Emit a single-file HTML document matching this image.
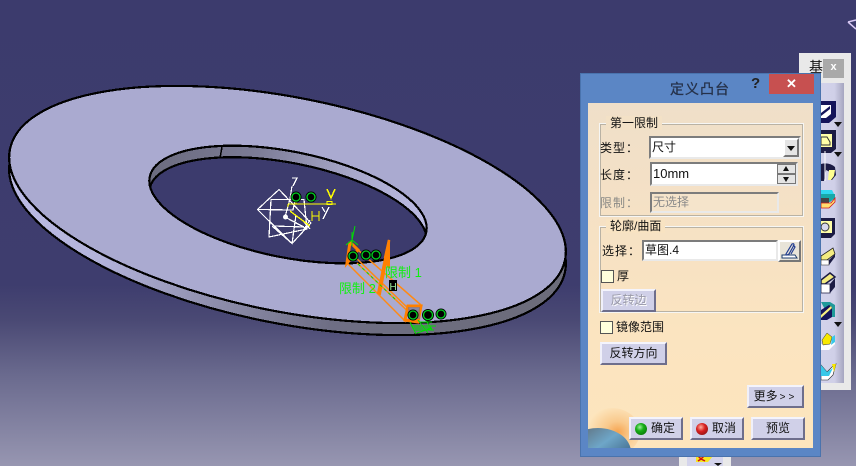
<!DOCTYPE html>
<html><head><meta charset="utf-8"><style>
html,body{margin:0;padding:0}
body{width:856px;height:466px;overflow:hidden;position:relative;background:#3c3b6d;font-family:"Liberation Sans","Noto Sans CJK SC",sans-serif;font-size:12px;color:#111}
.a{position:absolute;box-sizing:border-box}
.t{position:absolute;white-space:nowrap;line-height:14px}
.in{position:absolute;box-sizing:border-box;background:#fff;border-style:solid;border-width:2px;border-color:#7c7c7c #e9e9e9 #e9e9e9 #7c7c7c;line-height:18px;padding-left:1px;white-space:nowrap}
.btn{position:absolute;box-sizing:border-box;background:#d0d0e8;border-style:solid;border-width:2px;border-color:#f4f4fc #6e6e8c #6e6e8c #f0f0fa;text-align:center;line-height:18px;white-space:nowrap}
.grp{position:absolute;box-sizing:border-box;border:1px solid #f6f6f4;box-shadow:inset 0 0 0 1px #b9b2a4}
.lb{position:absolute;top:-8px;left:6px;padding:0 4px;line-height:14px;background:#f3e1c6}
.cb{position:absolute;box-sizing:border-box;width:13px;height:13px;background:#ffffdc;border:1.5px solid #555}
</style></head><body>
<div class="a" style="left:0;top:0;width:856px;height:466px;background:linear-gradient(#3c3b6d 0,#3e3d6e 285px,#4a4974 320px,#6a6a8e 375px,#9796b1 466px)"></div>

<svg class="a" style="left:0;top:0" width="856" height="466" viewBox="0 0 856 466">
<defs>
<linearGradient id="side" gradientUnits="userSpaceOnUse" x1="0" y1="0" x2="566" y2="0">
<stop offset="0" stop-color="#bcbce6"/><stop offset=".2" stop-color="#b2b2da"/><stop offset=".4" stop-color="#9090ae"/><stop offset=".62" stop-color="#6e6e84"/><stop offset="1" stop-color="#6c6c7a"/></linearGradient>
<linearGradient id="wall" gradientUnits="userSpaceOnUse" x1="150" y1="0" x2="430" y2="0">
<stop offset="0" stop-color="#6c6c80"/><stop offset=".35" stop-color="#7c7c96"/><stop offset=".7" stop-color="#a8a8ca"/><stop offset="1" stop-color="#bcbce4"/></linearGradient>
<clipPath id="hc"><ellipse cx="288" cy="204.5" rx="141" ry="53" transform="rotate(11.25 288 204.5)"/></clipPath>
</defs>
<g shape-rendering="crispEdges">
<ellipse cx="287.5" cy="216.5" rx="283" ry="107" transform="rotate(11.25 287.5 216.5)" fill="url(#side)" stroke="#000" stroke-width="2.2"/>
<ellipse cx="287.5" cy="204.5" rx="283" ry="107" transform="rotate(11.25 287.5 204.5)" fill="#aaaad0" stroke="#000" stroke-width="2.2"/>
<ellipse cx="288" cy="204.5" rx="141" ry="53" transform="rotate(11.25 288 204.5)" fill="url(#wall)"/>
<g clip-path="url(#hc)"><ellipse cx="288" cy="216" rx="141" ry="53" transform="rotate(11.25 288 216)" fill="#3c3b6d" stroke="#000" stroke-width="2.2"/>
<path d="M222 147L220 158" stroke="#000" stroke-width="1.5"/></g>
<ellipse cx="288" cy="204.5" rx="141" ry="53" transform="rotate(11.25 288 204.5)" fill="none" stroke="#000" stroke-width="2.2"/>
</g>

<!-- axis -->
<g fill="none" stroke="#fff" stroke-width="1.2" shape-rendering="crispEdges">
<path d="M257.5 209.500L279 189.500L311 223L292 243.500Z"/>
<path d="M271 199.500H304L307 229L269 237Z"/>
<path d="M257.500 209.500L293 210L296 196"/>
<path d="M272 226L292 243.500L296 215"/>
<path d="M274 226L304 227L285 217"/>
<path d="M292 178H297L293 186M292 186L290 199L285 217L307 229"/>
<path d="M304 229L310 220M304 222L310 229"/>
<path d="M322 207L325 212M329 207L323 219"/>
</g>
<circle cx="285.500" cy="217" r="2.500" fill="#fff"/>
<g fill="none" stroke="#ffff00" stroke-width="1.300" shape-rendering="crispEdges">
<path d="M288 204H336M288 204V207M296 200V204M290 211L310 226M312 211V221M319 211V221M312 216H319"/>
<path d="M327 189L331 198L335 189" stroke-width="1.500"/>
<rect x="327" y="201.500" width="5" height="3"/>
</g>

<!-- orange sketch -->
<g fill="none" stroke="#ff8a14" stroke-width="1.500">
<path d="M347 263L406 322M358 250L421 305M353 255L414 314M357 263L417 320"/>
</g>
<g fill="none" stroke="#ff8000" stroke-width="3">
<path d="M350 242L347 263L358 250L350 242"/>
<path d="M408 306H421L418 322L405 320Z"/>
</g>
<rect x="408" y="307" width="12" height="12" fill="#707088" opacity=".6"/>
<path d="M378 293L385 258L389 240L389 268L386 262L380 294Z" fill="#ff8000" stroke="#ff8000" stroke-width="2"/>
<path d="M385 258L389 240L387 262" fill="none" stroke="#ff8000" stroke-width="2.500"/>
<path d="M358 264L396 300" stroke="#00e000" stroke-width="1" stroke-dasharray="3 3" fill="none"/>
<path d="M355 226L352 240M352 232V246M346 245L352 240L358 245" stroke="#00e000" fill="none"/>
<path d="M410 322L416 334M411 326H436M414 330H434M417 333L432 328M425 319L432 330M420 322H432M412 328H430M418 320L428 333" stroke="#00e000" fill="none"/>

<!-- constraint circles -->
<g fill="#000"><circle cx="353" cy="256" r="5.500"/><circle cx="366" cy="255" r="5.500"/><circle cx="376" cy="255" r="5.500"/><circle cx="413" cy="315" r="5.500"/><circle cx="428" cy="315" r="6"/><circle cx="441" cy="314" r="5.500"/><circle cx="296" cy="197" r="5.500"/><circle cx="311" cy="197" r="5.500"/></g>
<g fill="none" stroke="#00d020" stroke-width="1.300"><circle cx="353" cy="256" r="4"/><circle cx="366" cy="255" r="4"/><circle cx="376" cy="255" r="4"/><circle cx="413" cy="315" r="4"/><circle cx="428" cy="315" r="4.500"/><circle cx="441" cy="314" r="4"/><circle cx="296" cy="197" r="4"/><circle cx="311" cy="197" r="4"/></g>
<text x="385" y="277" font-size="13" fill="#10f010" font-family="'Liberation Sans','Noto Sans CJK SC',sans-serif">限制 1</text>
<text x="339" y="293" font-size="13" fill="#10f010" font-family="'Liberation Sans','Noto Sans CJK SC',sans-serif">限制 2</text>
<rect x="389" y="280" width="8" height="11" fill="#000"/>
<text x="389.500" y="290" font-size="10" fill="#9ff09f" font-family="'Liberation Sans',sans-serif">H</text>

<!-- top right fragment -->
<path d="M848 22L856 20M848 22L856 29" stroke="#d8c8f4" stroke-width="1.500" fill="none"/>
</svg>

<!-- toolbar -->
<div class="a" style="left:799px;top:53px;width:52px;height:337px;background:#e9e9e9"></div>
<div class="t" style="left:809px;top:60px;font-size:14px">基</div>
<div class="a" style="left:823px;top:59px;width:21px;height:19px;background:#a9a9a9;color:#fff;text-align:center;line-height:17px;font-size:11px;font-weight:bold">x</div>
<div class="a" style="left:812px;top:83px;width:32px;height:300px;background:linear-gradient(90deg,#d4d4ec 0,#d0d0e8 70%,#a6a6c0 100%)"></div>
<svg class="a" style="left:799px;top:83px" width="57" height="310" viewBox="799 83 57 310">
<path d="M821 101H836V117L829 123H821Z" fill="#14145a"/><path d="M821 105H831V114L826 118H821Z" fill="#fff"/><path d="M821 113L830 106V109L821 116Z" fill="#14145a"/>
<path d="M834 122H842L838 127Z" fill="#111"/>
<path d="M821 130H836V149L831 153H821Z" fill="#1c1c44"/><path d="M821 134H832V147H821Z" fill="#ffffa8"/><path d="M821 137H827L830 142V145H821Z" fill="none" stroke="#333"/>
<path d="M834 152H842L838 157Z" fill="#111"/>
<path d="M821 164Q829 162 835 167L836 175L832 180H829L830 172L826 170L824 181H821Z" fill="#1c1c44"/><path d="M829 170L835 170L834 176L831 180H828Z" fill="#ffff90"/><path d="M825 151V181" stroke="#fff"/>
<path d="M821 190H832L834 194H821Z" fill="#30d8f0"/><path d="M821 194H835V198L830 202H821Z" fill="#18a8a8"/><rect x="821" y="198" width="8" height="5" fill="#444"/><path d="M821 203H831L835 198V202L829 208H821Z" fill="#ffe070" stroke="#d01818" stroke-width=".8"/>
<path d="M821 218H835V234L831 238H821Z" fill="#1c1c44"/><path d="M821 221H832V233H821Z" fill="#ffffa8"/><circle cx="825" cy="227" r="4" fill="#d8d8ec" stroke="#333"/>
<path d="M821 256L833 248L835 254L827 260L821 260Z" fill="#f4ec80" stroke="#222" stroke-width=".8"/><path d="M821 260H829V265H821Z" fill="#fff" stroke="#222" stroke-width=".6"/><path d="M829 260L835 254V257L829 265Z" fill="#1c1c44"/>
<path d="M821 280L830 273L835 277L825 284H821Z" fill="#f4ec80" stroke="#1c1c44" stroke-width="1.500"/><path d="M821 284H830V293H821Z" fill="#fff" stroke="#1c1c44" stroke-width=".8"/><path d="M830 284L835 278V287L830 293Z" fill="#1c1c44"/>
<path d="M821 302H830L835 305V317H829L821 302Z" fill="#209a9a"/><path d="M821 310L829 305L832 307V317L827 320H821Z" fill="#14145a"/><path d="M821 315L831 306L832 308L821 318Z" fill="#f8f080"/>
<path d="M834 322H842L838 327Z" fill="#111"/>
<path d="M821 344V350H829L835 344V338L830 343Z" fill="#fff"/><path d="M822 340L827 333L832 337L830 344L823 345Z" fill="#f8e800" stroke="#333" stroke-width=".5"/><path d="M832 337L835 335V342L831 345Z" fill="#38c8e8"/>
<path d="M821 365L827 372L833 366L836 364L833 375L828 380H821Z" fill="#fff" stroke="#222" stroke-width=".6"/><path d="M821 365L827 372L833 368L829 376H821Z" fill="#38c8e8"/><path d="M832 364H836L834 372Z" fill="#f8e800"/>
</svg>

<!-- lower toolbar fragment -->
<div class="a" style="left:679px;top:456px;width:52px;height:10px;background:#e9e9e9"></div>
<div class="a" style="left:687px;top:456px;width:36px;height:10px;background:#d4d4ec"></div>
<svg class="a" style="left:690px;top:456px" width="34" height="10" viewBox="0 0 34 10"><path d="M6 0H23L18 6H6Z" fill="#f8e820"/><path d="M8 0L11 3L14 0M8 5L11 3L15 5" stroke="#d01010" stroke-width="1.500" fill="none"/><path d="M24 7H32L28 10Z" fill="#111"/></svg>

<!-- dialog -->
<div class="a" style="left:580px;top:73px;width:241px;height:384px;background:#5b86c5;border:1px solid #4a73ad"></div>
<div class="a" style="left:769px;top:74px;width:45px;height:20px;background:#c75050;color:#fff;text-align:center;line-height:19px;font-size:13px;font-weight:bold">✕</div>
<div class="t" style="left:670px;top:81px;font-size:14px;line-height:16px;letter-spacing:1px;color:#26324a;-webkit-text-stroke:.3px #26324a">定义凸台</div>
<div class="t" style="left:751px;top:77px;font-size:15px;font-weight:bold;color:#222">?</div>
<div class="a" style="left:588px;top:103px;width:225px;height:345px;background:linear-gradient(#efdfc9 0,#f5e1c5 110px,#fbe4c0 230px,#fde5bd 345px);overflow:hidden">
<svg class="a" style="left:0;top:300px" width="60" height="45" viewBox="0 0 60 45">
<defs><radialGradient id="gl" cx="0.6" cy="0.5" r="0.55"><stop offset="0" stop-color="#f6a450"/><stop offset=".4" stop-color="#f9c98c"/><stop offset="1" stop-color="#fde5bd"/></radialGradient>
<linearGradient id="pl" x1="0" y1="0" x2="1" y2="1"><stop offset="0" stop-color="#5a5f66"/><stop offset=".45" stop-color="#6ea6c8"/><stop offset="1" stop-color="#22405f"/></linearGradient></defs>
<ellipse cx="24" cy="29" rx="28" ry="24" fill="url(#gl)"/>
<ellipse cx="10" cy="49" rx="33" ry="24" fill="url(#pl)"/>
</svg>
</div>

<div class="grp" style="left:599px;top:123px;width:205px;height:94px"><div class="lb">第一限制</div></div>
<div class="t" style="left:600px;top:141px;letter-spacing:1px">类型：</div>
<div class="in" style="left:649px;top:136px;width:152px;height:23px;padding-left:1px">尺寸</div>
<div class="btn" style="left:783px;top:138px;width:16px;height:19px;background:#e4e4e4;border-color:#fff #777 #777 #fff"></div>
<div class="a" style="left:787px;top:146px;border:4px solid transparent;border-top:5px solid #111;border-bottom:0"></div>
<div class="t" style="left:600px;top:168px;letter-spacing:1px">长度：</div>
<div class="in" style="left:650px;top:162px;width:148px;height:24px;font-size:13px;line-height:19px">10mm</div>
<div class="a" style="left:777px;top:164px;width:19px;height:20px;background:#777"></div>
<div class="a" style="left:778px;top:165px;width:17px;height:8px;background:#e4e4e4"></div>
<div class="a" style="left:778px;top:175px;width:17px;height:8px;background:#e4e4e4"></div>
<div class="a" style="left:783px;top:166px;border:3.500px solid transparent;border-bottom:5px solid #111;border-top:0"></div>
<div class="a" style="left:783px;top:177px;border:3.500px solid transparent;border-top:5px solid #111;border-bottom:0"></div>
<div class="t" style="left:600px;top:196px;color:#8a8a86;letter-spacing:1px">限制：</div>
<div class="in" style="left:650px;top:192px;width:129px;height:21px;background:#f5e4cb;color:#8a8a8a;line-height:17px">无选择</div>

<div class="grp" style="left:599px;top:226px;width:205px;height:87px"><div class="lb" style="background:#f8e3c2">轮廓/曲面</div></div>
<div class="t" style="left:602px;top:244px;letter-spacing:1px">选择：</div>
<div class="in" style="left:642px;top:240px;width:136px;height:21px;line-height:17px">草图.4</div>
<div class="btn" style="left:778px;top:240px;width:23px;height:22px;background:#e8e4d8;border-color:#fff #777 #777 #fff"></div>
<svg class="a" style="left:780px;top:242px" width="19" height="18" viewBox="0 0 19 18"><path d="M2 13H15L17 16H2Z" fill="#fff" stroke="#1c3c6c"/><path d="M6 12L12 2Q14 1 14 3L9 12Q6 14 6 12ZM13 3L15 5L11 12" fill="none" stroke="#203c90" stroke-width="1.200"/></svg>
<div class="cb" style="left:601px;top:270px"></div>
<div class="t" style="left:617px;top:269px">厚</div>
<div class="btn" style="left:601px;top:289px;width:55px;height:23px;color:#9a9aa8;text-shadow:1px 1px 0 #fff">反转边</div>
<div class="cb" style="left:600px;top:321px"></div>
<div class="t" style="left:616px;top:320px">镜像范围</div>
<div class="btn" style="left:600px;top:342px;width:67px;height:23px">反转方向</div>
<div class="btn" style="left:747px;top:385px;width:57px;height:23px">更多<span style="font-size:10px;letter-spacing:3px;margin-left:2px">&gt;&gt;</span></div>
<div class="btn" style="left:629px;top:417px;width:54px;height:23px;text-align:left;padding-left:20px">确定</div>
<div class="a" style="left:635px;top:423px;width:12px;height:12px;border-radius:50%;background:radial-gradient(circle at 40% 35%,#9fef9f 0,#18b018 35%,#046004 100%)"></div>
<div class="btn" style="left:690px;top:417px;width:54px;height:23px;text-align:left;padding-left:20px">取消</div>
<div class="a" style="left:696px;top:423px;width:12px;height:12px;border-radius:50%;background:radial-gradient(circle at 40% 35%,#ffb0a0 0,#d82020 40%,#701010 100%)"></div>
<div class="btn" style="left:751px;top:417px;width:54px;height:23px">预览</div>
</body></html>
